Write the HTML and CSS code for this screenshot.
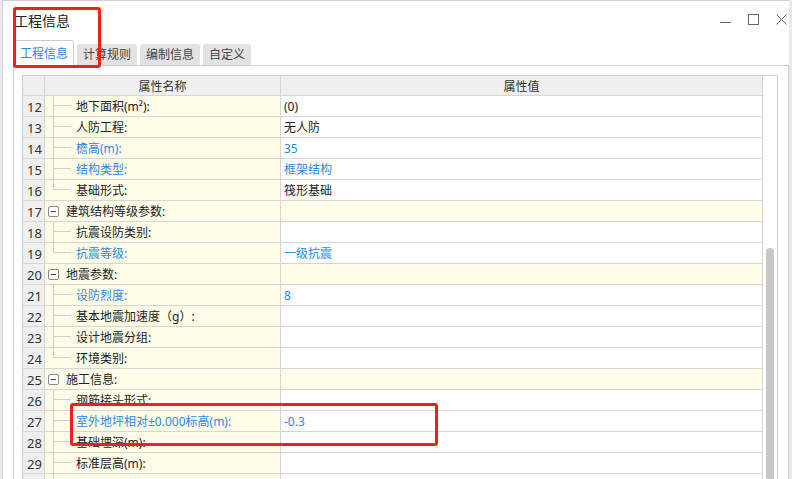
FILE: index.html
```html
<!DOCTYPE html>
<html lang="zh-CN">
<head>
<meta charset="utf-8">
<title>工程信息</title>
<link rel="stylesheet" href="styles.css">
</head>
<body>
<div class="window">
  <div class="titlebar">
    <div class="title">工程信息</div>
    <div class="controls">
      <svg class="ctl" width="11" height="11" viewBox="0 0 11 11"><line x1="0" y1="8.5" x2="11" y2="8.5"/></svg>
      <svg class="ctl" width="11" height="11" viewBox="0 0 11 11"><rect x="0.5" y="0.5" width="10" height="10"/></svg>
      <svg class="ctl" width="11" height="11" viewBox="0 0 11 11"><path d="M0.5 0.5 L10.5 10.5 M10.5 0.5 L0.5 10.5"/></svg>
    </div>
  </div>
  <div class="tabs">
    <div class="tab active">工程信息</div>
    <div class="tab">计算规则</div>
    <div class="tab">编制信息</div>
    <div class="tab">自定义</div>
  </div>
  <div class="panel">
    <div class="table">
      <div class="grid">
        <div class="row head"><div class="num"></div><div class="name">属性名称</div><div class="val">属性值</div></div>

        <div class="row"><div class="num">12</div><div class="name"><span class="tree"><span class="up"></span><span class="down"></span></span><span class="label">地下面积(m²):</span></div><div class="val">(0)</div></div>
        <div class="row"><div class="num">13</div><div class="name"><span class="tree"><span class="up"></span><span class="down"></span></span><span class="label">人防工程:</span></div><div class="val">无人防</div></div>
        <div class="row blue"><div class="num">14</div><div class="name"><span class="tree"><span class="up"></span><span class="down"></span></span><span class="label">檐高(m):</span></div><div class="val">35</div></div>
        <div class="row blue"><div class="num">15</div><div class="name"><span class="tree"><span class="up"></span><span class="down"></span></span><span class="label">结构类型:</span></div><div class="val">框架结构</div></div>
        <div class="row"><div class="num">16</div><div class="name"><span class="tree"><span class="up"></span><span class="down last"></span></span><span class="label">基础形式:</span></div><div class="val">筏形基础</div></div>

        <div class="row group"><div class="num">17</div><div class="name"><span class="box"><span class="minus"></span></span><span class="glabel">建筑结构等级参数:</span></div><div class="val"></div></div>
        <div class="row"><div class="num">18</div><div class="name"><span class="tree"><span class="up"></span><span class="down"></span></span><span class="label">抗震设防类别:</span></div><div class="val"></div></div>
        <div class="row blue"><div class="num">19</div><div class="name"><span class="tree"><span class="up"></span><span class="down last"></span></span><span class="label">抗震等级:</span></div><div class="val">一级抗震</div></div>

        <div class="row group"><div class="num">20</div><div class="name"><span class="box"><span class="minus"></span></span><span class="glabel">地震参数:</span></div><div class="val"></div></div>
        <div class="row blue"><div class="num">21</div><div class="name"><span class="tree"><span class="up"></span><span class="down"></span></span><span class="label">设防烈度:</span></div><div class="val">8</div></div>
        <div class="row"><div class="num">22</div><div class="name"><span class="tree"><span class="up"></span><span class="down"></span></span><span class="label">基本地震加速度（g）:</span></div><div class="val"></div></div>
        <div class="row"><div class="num">23</div><div class="name"><span class="tree"><span class="up"></span><span class="down"></span></span><span class="label">设计地震分组:</span></div><div class="val"></div></div>
        <div class="row"><div class="num">24</div><div class="name"><span class="tree"><span class="up"></span><span class="down last"></span></span><span class="label">环境类别:</span></div><div class="val"></div></div>

        <div class="row group"><div class="num">25</div><div class="name"><span class="box"><span class="minus"></span></span><span class="glabel">施工信息:</span></div><div class="val"></div></div>
        <div class="row"><div class="num">26</div><div class="name"><span class="tree"><span class="up"></span><span class="down"></span></span><span class="label">钢筋接头形式:</span></div><div class="val"></div></div>
        <div class="row blue"><div class="num">27</div><div class="name"><span class="tree"><span class="up"></span><span class="down"></span></span><span class="label">室外地坪相对±0.000标高(m):</span></div><div class="val">-0.3</div></div>
        <div class="row"><div class="num">28</div><div class="name"><span class="tree"><span class="up"></span><span class="down"></span></span><span class="label">基础埋深(m):</span></div><div class="val"></div></div>
        <div class="row"><div class="num">29</div><div class="name"><span class="tree"><span class="up"></span><span class="down"></span></span><span class="label">标准层高(m):</span></div><div class="val"></div></div>
        <div class="row"><div class="num"></div><div class="name"><span class="tree"><span class="up"></span><span class="down"></span></span><span class="label"></span></div><div class="val"></div></div>
      </div>
      <div class="scroll"><div class="thumb"></div></div>
    </div>
  </div>
  <div class="mark mark-title"></div>
  <div class="mark mark-row"></div>
</div>
</body>
</html>
```
FILE: styles.css
```css
html, body {
  margin: 0;
  padding: 0;
}
body {
  background: #e9e9e9;
  font-family: "Noto Sans", "Noto Sans CJK SC", sans-serif;
  color: #333;
}
.window {
  position: relative;
  margin-left: 2px;
  width: 787px;
  height: 479px;
  box-sizing: border-box;
  border-left: 1px solid #d2d2d2;
  border-top: 1px solid #d2d2d2;
  background: #fff;
  overflow: hidden;
}
.titlebar {
  height: 39px;
  display: flex;
  justify-content: space-between;
  align-items: center;
  padding-left: 11px;
}
.title {
  font-size: 14px;
  line-height: 20px;
  color: #222;
}
.controls {
  align-self: flex-start;
  margin-top: 13px;
  padding-right: 2px;
  display: flex;
  gap: 17px;
}
.ctl {
  display: block;
  fill: none;
  stroke: #666;
  stroke-width: 1;
}
.tabs {
  height: 26px;
  margin-bottom: -1px;
  padding-left: 11px;
  display: flex;
  align-items: flex-end;
  gap: 3px;
  position: relative;
  z-index: 1;
}
.tab {
  height: 21px;
  margin-bottom: 1px;
  padding: 0 6px;
  background: #e2e2e2;
  border-radius: 3px 3px 0 0;
  font-size: 12px;
  line-height: 21px;
  color: #444;
}
.tab.active {
  height: 25px;
  margin-bottom: 0;
  padding: 0 5px;
  background: #fff;
  border: 1px solid #cdcdcd;
  border-bottom: none;
  color: #2b88e8;
  line-height: 25px;
}
.panel {
  margin-left: 10px;
  border: 1px solid #cfcfcf;
  padding: 9px 10px 0 8px;
}
.table {
  border: 1px solid #cfcfcf;
  display: flex;
}
.grid {
  width: 740px;
}
.row {
  display: grid;
  grid-template-columns: 22px 236px 482px;
  height: 21px;
  font-size: 12px;
}
.row > div {
  box-sizing: border-box;
  border-right: 1px solid #d6d6d6;
  border-bottom: 1px solid #d6d6d6;
  line-height: 22px;
  white-space: nowrap;
  overflow: hidden;
}
.row.head {
  height: 20px;
}
.row.head > div {
  display: block;
  background: #efefef;
  text-align: center;
  line-height: 21px;
  padding: 0;
  color: #333;
}
.num {
  background: #efefef;
  padding-left: 4px;
  font-size: 13px;
  color: #333;
}
.name {
  background: #fffce8;
  display: flex;
  color: #222;
}
.val {
  background: #fff;
  padding-left: 3px;
  color: #222;
}
.row.group .val {
  background: #fffce8;
}
.row.blue .label,
.row.blue .val {
  color: #2b88e8;
}
.tree {
  margin-left: 8px;
  width: 18px;
  display: flex;
  flex-direction: column;
  flex-shrink: 0;
}
.tree .up {
  height: 10px;
  box-sizing: border-box;
  border-left: 1px solid #d0d0d0;
  border-bottom: 1px solid #d0d0d0;
}
.tree .down {
  flex: 1;
  border-left: 1px solid #d0d0d0;
}
.tree .down.last {
  border-left-color: transparent;
}
.label {
  margin-left: 5px;
}
.box {
  margin-left: 3px;
  align-self: center;
  width: 11px;
  height: 11px;
  box-sizing: border-box;
  border: 1px solid #8a8a8a;
  border-radius: 2px;
  display: flex;
  align-items: center;
  justify-content: center;
  flex-shrink: 0;
  background: #fff;
}
.minus {
  width: 5px;
  height: 1px;
  background: #444;
}
.glabel {
  margin-left: 7px;
}
.scroll {
  width: 14px;
  background: #fff;
}
.thumb {
  margin-top: 172px;
  margin-left: 3px;
  width: 8px;
  height: 300px;
  border-radius: 4px;
  background: #c7c7c7;
}
.mark {
  position: absolute;
  box-sizing: border-box;
  border: 3px solid #f2201c;
  border-radius: 3px;
  z-index: 5;
}
.mark-title {
  left: 10px;
  top: 6px;
  width: 88px;
  height: 61px;
}
.mark-row {
  left: 67px;
  top: 402px;
  width: 368px;
  height: 43px;
}
```
